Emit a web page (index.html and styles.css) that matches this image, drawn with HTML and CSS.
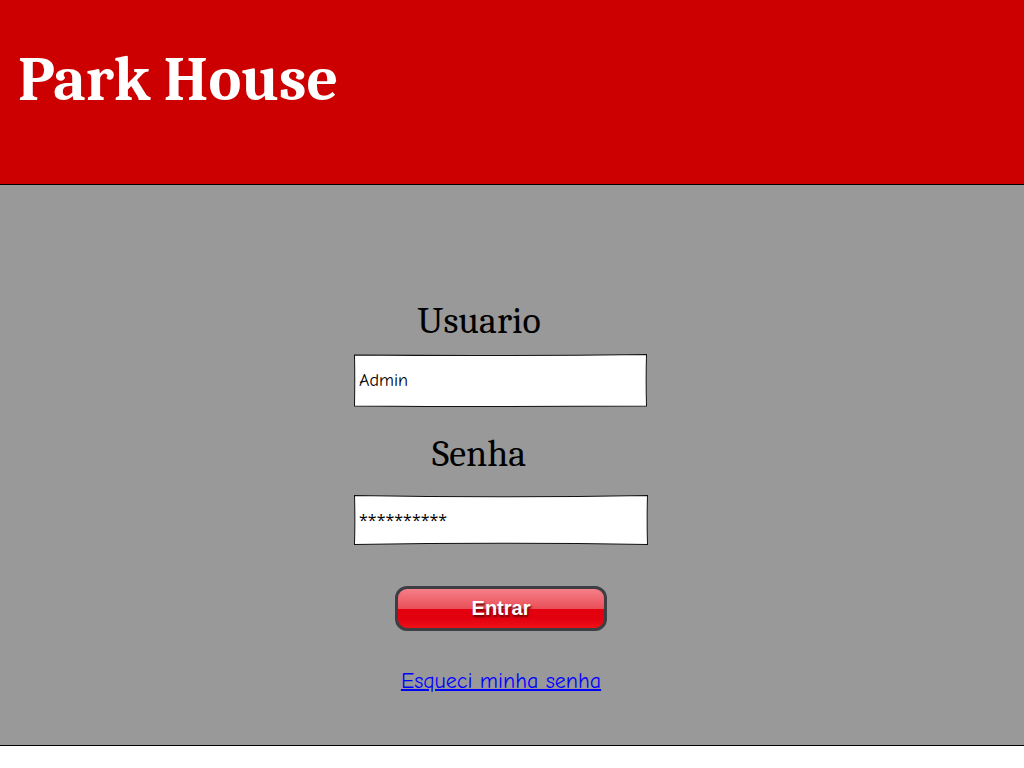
FILE: index.html
```html
<!DOCTYPE html>
<html lang="pt-BR">
<head>
  <meta charset="utf-8">
  <meta name="viewport" content="width=device-width, initial-scale=1">
  <title>Park House</title>
  <link rel="stylesheet" href="styles.css">
</head>
<body>
  <header class="banner">
    <h1 class="brand">Park House</h1>
  </header>
  <main class="content">
    <form class="login">
      <label class="caption" for="usuario">Usuario</label>
      <div class="field field-user">
        <svg class="frame" viewBox="0 0 293 53" preserveAspectRatio="none" aria-hidden="true">
          <path d="M.5 1Q146 2.2 291.500 .5Q290.800 26 291.500 52Q146 53 .5 52Q1 26 .5 1Z"/>
        </svg>
        <input class="entry" id="usuario" type="text" value="Admin">
      </div>
      <label class="caption caption-pass" for="senha">Senha</label>
      <div class="field field-pass">
        <svg class="frame" viewBox="0 0 293 50" preserveAspectRatio="none" aria-hidden="true">
          <path d="M.5 .5Q146 3.200 292.500 .5Q291.800 25 292.500 49.500Q146 47 .5 49.500Q1.200 25 .5 .5Z"/>
        </svg>
        <input class="entry entry-pass" id="senha" type="text" value="**********">
      </div>
      <button class="submit" type="button">Entrar</button>
      <a class="forgot" href="#">Esqueci minha senha</a>
    </form>
  </main>
</body>
</html>
```
FILE: styles.css
```css
* {
  box-sizing: border-box;
}

body {
  margin: 0;
  background: #fff;
  color: #000;
  font-family: "Comic Sans MS", "Comic Neue", Lato, sans-serif;
}

.banner {
  padding: 44px 18px 68px;
  background: #c00;
  border-bottom: 1px solid #000;
}

.brand {
  margin: 0;
  color: #fff;
  font: bold 62px/72px Cambria, Caladea, "Liberation Serif", serif;
}

.content {
  display: flex;
  justify-content: center;
  padding: 114px 22px 50px 0;
  background: #999;
  border-bottom: 1px solid #000;
}

.login {
  display: flex;
  flex-direction: column;
  align-items: center;
  width: 294px;
}

.caption {
  padding-right: 44px;
  font: 38px/44px Cambria, Caladea, "Liberation Serif", serif;
}

.caption-pass {
  margin-top: 25px;
}

.field {
  display: grid;
  width: 100%;
}

.field-user {
  height: 53px;
  margin-top: 11px;
}

.field-pass {
  height: 50px;
  margin-top: 19px;
}

.frame,
.entry {
  grid-area: 1 / 1;
  width: 100%;
  height: 100%;
  min-height: 0;
}

.frame {
  fill: #fff;
  stroke: #111;
  stroke-width: 1;
}

.entry {
  padding: 0 5px;
  border: 0;
  background: transparent;
  color: #000;
  font: 18px/24px "Comic Sans MS", "Comic Neue", Lato, sans-serif;
}

.entry-pass {
  font: 16px/24px "Open Sans", "Noto Sans", sans-serif;
}

.submit {
  width: 212px;
  height: 45px;
  margin-top: 41px;
  padding: 0 0 2px;
  border: 3px solid #3c3e43;
  border-radius: 12px;
  background: linear-gradient(#f48088 0%, #ea5059 50%, #e2000f 51%, #e2000f 75%, #ee1018 100%);
  color: #fff;
  font: bold 20px/24px "Liberation Sans", Arial, sans-serif;
  text-shadow: 1px 2px 2px #600;
}

.forgot {
  margin-top: 36px;
  color: #00f;
  font-size: 22px;
  line-height: 28px;
  text-decoration-thickness: 2px;
}
```
